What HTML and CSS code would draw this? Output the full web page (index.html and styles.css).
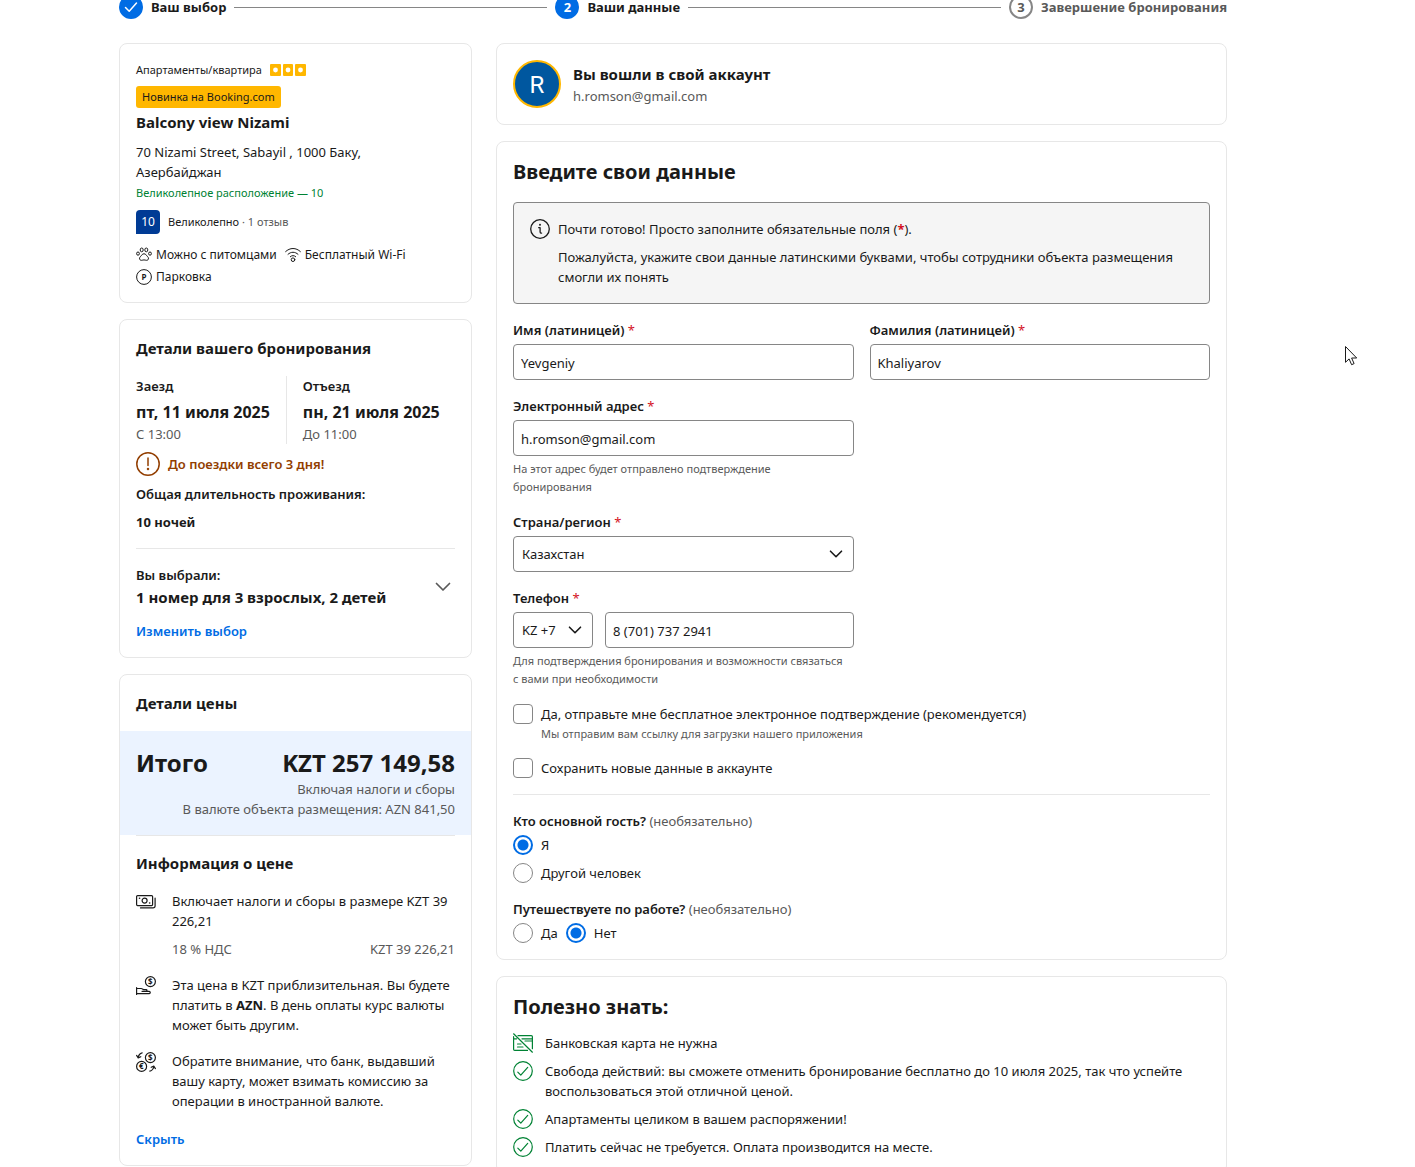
FILE: index.html
```html
<!DOCTYPE html>
<html lang="ru">
  <head>
    <meta charset="UTF-8">
    <meta name="viewport" content="width=device-width, initial-scale=1">
    <title>Booking.com: Ваши данные</title>
    <link rel="stylesheet" href="styles.css">
  </head>
  <body>
    <div class="page">
      <ol class="steps">
        <li class="step">
          <span class="step-mark done">
            <svg width="14" height="14" viewBox="0 0 14 14"><path d="M1.5 7.5l3.700 3.700L12.500 3" fill="none" stroke="#fff" stroke-width="1.5" stroke-linecap="round" stroke-linejoin="round"/></svg>
          </span>
          <span>Ваш выбор</span>
        </li>
        <li class="step-line"></li>
        <li class="step">
          <span class="step-mark current">2</span>
          <span>Ваши данные</span>
        </li>
        <li class="step-line"></li>
        <li class="step next">
          <span class="step-mark">3</span>
          <span>Завершение бронирования</span>
        </li>
      </ol>

      <div class="columns">
        <aside class="column">
          <section class="card hotel">
            <div class="hotel-type">
              <span>Апартаменты/квартира</span>
              <svg width="36" height="12" viewBox="0 0 36 12">
                <g fill="#ffb700">
                  <rect x="0" y="0" width="11" height="12" rx="1"/>
                  <rect x="13" y="0" width="10" height="12" rx="1"/>
                  <rect x="25" y="0" width="11" height="12" rx="1"/>
                </g>
                <g fill="#fff">
                  <circle cx="5.5" cy="6" r="2.4"/>
                  <circle cx="18" cy="6" r="2.4"/>
                  <circle cx="30.5" cy="6" r="2.4"/>
                </g>
              </svg>
            </div>
            <span class="badge">Новинка на Booking.com</span>
            <h2 class="title">Balcony view Nizami</h2>
            <address class="address">70 Nizami Street, Sabayil , 1000 Баку, Азербайджан</address>
            <div class="location">Великолепное расположение — 10</div>
            <div class="review">
              <span class="score">10</span>
              <span>Великолепно <span class="muted">· 1 отзыв</span></span>
            </div>
            <ul class="facilities">
              <li>
                <svg width="16" height="16" viewBox="0 0 16 16" fill="none" stroke="#1a1a1a" stroke-width="1">
                  <ellipse cx="5.700" cy="2.900" rx="1.500" ry="1.900"/>
                  <ellipse cx="10.300" cy="2.900" rx="1.500" ry="1.900"/>
                  <ellipse cx="2" cy="6.600" rx="1.400" ry="1.600"/>
                  <ellipse cx="14" cy="6.600" rx="1.400" ry="1.600"/>
                  <path d="M8 6.800c-1.600 0-2.200 1.200-3 2.200-.9 1-1.800 1.700-1.400 3 .4 1.400 1.700 1.500 2.600 1.200 1.200-.4 2.400-.4 3.600 0 .9.300 2.200.2 2.600-1.200.4-1.300-.5-2-1.400-3-.8-1-1.400-2.200-3-2.200z"/>
                </svg>
                <span>Можно с питомцами</span>
              </li>
              <li>
                <svg width="16" height="16" viewBox="0 0 16 16" fill="none" stroke="#1a1a1a" stroke-width="1" stroke-linecap="round">
                  <path d="M.6 4.600C5 .4 11 .4 15.400 4.600M3 7.300c3-2.800 7-2.800 10 0M5.300 9.700c1.600-1.500 3.800-1.500 5.400 0"/>
                  <circle cx="8" cy="12.700" r="1.800"/>
                </svg>
                <span>Бесплатный Wi-Fi</span>
              </li>
              <li>
                <svg width="16" height="16" viewBox="0 0 16 16">
                  <circle cx="8" cy="8" r="7.400" fill="none" stroke="#1a1a1a" stroke-width="1"/>
                  <text class="glyph" x="8" y="11" font-size="8" text-anchor="middle">P</text>
                </svg>
                <span>Парковка</span>
              </li>
            </ul>
          </section>

          <section class="card booking">
            <h2 class="title">Детали вашего бронирования</h2>
            <div class="dates">
              <div class="date">
                <div class="strong">Заезд</div>
                <div class="date-value">пт, 11 июля 2025</div>
                <div class="muted">С 13:00</div>
              </div>
              <div class="date">
                <div class="strong">Отъезд</div>
                <div class="date-value">пн, 21 июля 2025</div>
                <div class="muted">До 11:00</div>
              </div>
            </div>
            <div class="warning">
              <svg width="24" height="24" viewBox="0 0 24 24" fill="none" stroke="#923e01" stroke-width="1.500" stroke-linecap="round">
                <circle cx="12" cy="12" r="11.200"/>
                <path d="M12 6v7.500"/>
                <circle cx="12" cy="17" r=".5"/>
              </svg>
              <span>До поездки всего 3 дня!</span>
            </div>
            <div class="strong">Общая длительность проживания:</div>
            <div class="nights">10 ночей</div>
            <div class="choice">
              <div>
                <div class="strong">Вы выбрали:</div>
                <div class="title">1 номер для 3 взрослых, 2 детей</div>
              </div>
              <button class="toggle" type="button" aria-label="Показать детали">
                <svg width="16" height="10" viewBox="0 0 16 10"><path d="M1.500 1.500L8 8l6.500-6.500" fill="none" stroke="#595959" stroke-width="1.700" stroke-linecap="round" stroke-linejoin="round"/></svg>
              </button>
            </div>
            <a class="link" href="#">Изменить выбор</a>
          </section>

          <section class="card price">
            <h2 class="title price-title">Детали цены</h2>
            <div class="total">
              <div class="total-row">
                <span>Итого</span>
                <span>KZT 257 149,58</span>
              </div>
              <div class="muted">Включая налоги и сборы</div>
              <div class="muted">В валюте объекта размещения: AZN 841,50</div>
            </div>
            <div class="price-info">
              <h3 class="title">Информация о цене</h3>
              <div class="note">
                <svg width="20" height="20" viewBox="0 0 20 20" fill="none" stroke="#1a1a1a" stroke-width="1.200" stroke-linecap="round" stroke-linejoin="round">
                  <rect x=".6" y="3.600" width="16" height="10" rx="1"/>
                  <circle cx="8.600" cy="8.600" r="2.500"/>
                  <path d="M3.500 6.300h.1M13.600 11h.1" stroke-width="1.600"/>
                  <path d="M4.500 15.900h12.500c1.300 0 2.100-.8 2.100-2.100V6.200"/>
                </svg>
                <div class="note-text">
                  <p>Включает налоги и сборы в размере KZT 39 226,21</p>
                  <div class="tax muted">
                    <span>18 % НДС</span>
                    <span>KZT 39 226,21</span>
                  </div>
                </div>
              </div>
              <div class="note">
                <svg width="20" height="20" viewBox="0 0 20 20" fill="none" stroke="#1a1a1a" stroke-width="1.200" stroke-linecap="round" stroke-linejoin="round">
                  <circle cx="14.400" cy="5.600" r="5"/>
                  <path d="M.6 11.500v7M.6 12.500h4.500c1.500 0 2 1.200 3.300 1.200h1.800c1 0 1 1.600 0 1.600H6M10.500 15.300h2.700c1.300 0 1.500 2.300 0 2.300H.8"/>
                  <text class="glyph" x="14.400" y="8.700" font-size="8" text-anchor="middle">$</text>
                </svg>
                <p class="note-text">Эта цена в KZT приблизительная. Вы будете платить в <b>AZN</b>. В день оплаты курс валюты может быть другим.</p>
              </div>
              <div class="note">
                <svg width="20" height="20" viewBox="0 0 20 20" fill="none" stroke="#1a1a1a" stroke-width="1.200" stroke-linecap="round" stroke-linejoin="round">
                  <circle cx="14.400" cy="5.600" r="5"/>
                  <circle cx="5.600" cy="14.400" r="5"/>
                  <path d="M6.200.8C4 1.400 2.600 2.800 2.200 5.500M.6 3.400l1.600 2.500 2.600-1.200M13.800 19.200c2.200-.6 3.600-2 4-4.700M19.400 16.600l-1.600-2.500-2.600 1.200"/>
                  <text class="glyph" x="14.400" y="8.700" font-size="8" text-anchor="middle">$</text>
                  <text class="glyph" x="5.400" y="17.400" font-size="8" text-anchor="middle">€</text>
                </svg>
                <p class="note-text">Обратите внимание, что банк, выдавший вашу карту, может взимать комиссию за операции в иностранной валюте.</p>
              </div>
              <a class="link" href="#">Скрыть</a>
            </div>
          </section>
        </aside>

        <main class="column">
          <section class="card account">
            <span class="avatar">R</span>
            <div>
              <div class="title">Вы вошли в свой аккаунт</div>
              <div class="muted">h.romson@gmail.com</div>
            </div>
          </section>

          <form class="card details">
            <h1 class="heading">Введите свои данные</h1>
            <div class="alert">
              <svg width="20" height="20" viewBox="0 0 20 20" fill="none" stroke="#1a1a1a" stroke-width="1.300" stroke-linecap="round" stroke-linejoin="round">
                <circle cx="10" cy="10" r="9.300"/>
                <path d="M8.700 8.700h1.400v4.200c0 .8.600 1.200 1.500 1.200"/>
                <circle cx="10" cy="5.800" r=".4"/>
              </svg>
              <div>
                <p>Почти готово! Просто заполните обязательные поля (<b class="required">*</b>).</p>
                <p>Пожалуйста, укажите свои данные латинскими буквами, чтобы сотрудники объекта размещения смогли их понять</p>
              </div>
            </div>

            <div class="fields">
              <div class="field">
                <label for="firstname">Имя (латиницей) <span class="required">*</span></label>
                <input id="firstname" class="control" type="text" value="Yevgeniy">
              </div>
              <div class="field">
                <label for="lastname">Фамилия (латиницей) <span class="required">*</span></label>
                <input id="lastname" class="control" type="text" value="Khaliyarov">
              </div>
              <div class="field first">
                <label for="email">Электронный адрес <span class="required">*</span></label>
                <input id="email" class="control" type="email" value="h.romson@gmail.com">
                <div class="help">На этот адрес будет отправлено подтверждение бронирования</div>
              </div>
              <div class="field first">
                <label for="country">Страна/регион <span class="required">*</span></label>
                <div class="select">
                  <select id="country" class="control">
                    <option>Казахстан</option>
                  </select>
                  <svg width="14" height="8" viewBox="0 0 14 8"><path d="M1.500 1.200L7 6.700l5.500-5.500" fill="none" stroke="#1a1a1a" stroke-width="1.600" stroke-linecap="round" stroke-linejoin="round"/></svg>
                </div>
              </div>
              <div class="field first">
                <label for="phone">Телефон <span class="required">*</span></label>
                <div class="phone">
                  <div class="select">
                    <select class="control" aria-label="Код страны">
                      <option>KZ +7</option>
                    </select>
                    <svg width="14" height="8" viewBox="0 0 14 8"><path d="M1.500 1.200L7 6.700l5.500-5.500" fill="none" stroke="#1a1a1a" stroke-width="1.600" stroke-linecap="round" stroke-linejoin="round"/></svg>
                  </div>
                  <input id="phone" class="control" type="tel" value="8 (701) 737 2941">
                </div>
                <div class="help">Для подтверждения бронирования и возможности связаться с вами при необходимости</div>
              </div>
            </div>

            <div class="checks">
              <label class="option">
                <input type="checkbox">
                <span>Да, отправьте мне бесплатное электронное подтверждение (рекомендуется)<small>Мы отправим вам ссылку для загрузки нашего приложения</small></span>
              </label>
              <label class="option">
                <input type="checkbox">
                <span>Сохранить новые данные в аккаунте</span>
              </label>
            </div>

            <fieldset class="question">
              <legend>Кто основной гость? <span class="muted">(необязательно)</span></legend>
              <div class="options">
                <label class="option"><input type="radio" name="guest" checked><span>Я</span></label>
                <label class="option"><input type="radio" name="guest"><span>Другой человек</span></label>
              </div>
            </fieldset>
            <fieldset class="question">
              <legend>Путешествуете по работе? <span class="muted">(необязательно)</span></legend>
              <div class="options inline">
                <label class="option"><input type="radio" name="work"><span>Да</span></label>
                <label class="option"><input type="radio" name="work" checked><span>Нет</span></label>
              </div>
            </fieldset>
          </form>

          <section class="card">
            <h2 class="heading">Полезно знать:</h2>
            <ul class="good">
              <li>
                <svg width="20" height="20" viewBox="0 0 20 20" fill="none" stroke="#008234" stroke-width="1.200" stroke-linecap="round" stroke-linejoin="round">
                  <path d="M5 2.600h13.300c.7 0 1.100.4 1.100 1.100v12M.6 3.500v12.800c0 .7.4 1.100 1.100 1.100h12.800M9 5.800h10.400M.6 5.800h3M12 8h7.400M4.500 11h3.500M4.500 14h5.500M.6.800l18.800 18.400"/>
                </svg>
                <span>Банковская карта не нужна</span>
              </li>
              <li>
                <svg width="20" height="20" viewBox="0 0 20 20" fill="none" stroke="#008234" stroke-width="1.200" stroke-linecap="round" stroke-linejoin="round"><circle cx="10" cy="10" r="9.300"/><path d="M4.800 11.200l3 3 6.900-7.800"/></svg>
                <span>Свобода действий: вы сможете отменить бронирование бесплатно до 10 июля 2025, так что успейте воспользоваться этой отличной ценой.</span>
              </li>
              <li>
                <svg width="20" height="20" viewBox="0 0 20 20" fill="none" stroke="#008234" stroke-width="1.200" stroke-linecap="round" stroke-linejoin="round"><circle cx="10" cy="10" r="9.300"/><path d="M4.800 11.200l3 3 6.900-7.800"/></svg>
                <span>Апартаменты целиком в вашем распоряжении!</span>
              </li>
              <li>
                <svg width="20" height="20" viewBox="0 0 20 20" fill="none" stroke="#008234" stroke-width="1.200" stroke-linecap="round" stroke-linejoin="round"><circle cx="10" cy="10" r="9.300"/><path d="M4.800 11.200l3 3 6.900-7.800"/></svg>
                <span>Платить сейчас не требуется. Оплата производится на месте.</span>
              </li>
            </ul>
          </section>
        </main>
      </div>
    </div>

    <svg class="pointer" width="13" height="20" viewBox="0 0 13 20"><path d="M.5.500v15.800l3.600-3.400 2.500 5.800 2.500-1.100-2.500-5.600h5.100z" fill="#fff" stroke="#1a1a1a" stroke-width="1"/></svg>
  </body>
</html>
```
FILE: styles.css
```css
* {
  box-sizing: border-box;
  margin: 0;
  padding: 0;
}

body {
  background: #ffffff;
  color: #1a1a1a;
  font-family: "Segoe UI", "Noto Sans", sans-serif;
  font-size: 13px;
  line-height: 20px;
}

ul,
ol {
  list-style: none;
}

svg {
  flex: none;
}

.page {
  padding: 0 188px 0 119px;
}

.muted {
  color: #595959;
}

.strong {
  font-weight: 600;
}

.required {
  color: #d4111e;
}

.link {
  display: block;
  color: #006ce4;
  font-weight: 600;
  text-decoration: none;
}

.glyph {
  fill: #1a1a1a;
  stroke: none;
  font-weight: 700;
}

/* steps */

.steps {
  display: flex;
  align-items: center;
  gap: 8px;
  margin-top: -5px;
  margin-bottom: 24px;
  font-weight: 700;
}

.step {
  display: flex;
  align-items: center;
  gap: 8px;
  white-space: nowrap;
}

.step.next {
  color: #595959;
}

.step-line {
  flex: 1;
  height: 1px;
  background: #868686;
}

.step-mark {
  display: flex;
  align-items: center;
  justify-content: center;
  width: 24px;
  height: 24px;
  border: 2px solid #868686;
  border-radius: 50%;
}

.step-mark.done,
.step-mark.current {
  border-color: #006ce4;
  background: #006ce4;
  color: #ffffff;
}

/* layout */

.columns {
  display: grid;
  grid-template-columns: minmax(0, 353fr) minmax(0, 731fr);
  align-items: start;
  gap: 24px;
}

.column {
  display: flex;
  flex-direction: column;
  gap: 16px;
}

.card {
  border: 1px solid #e7e7e7;
  border-radius: 8px;
  padding: 16px;
}

.title {
  font-size: 15px;
  font-weight: 700;
  line-height: 24px;
}

.heading {
  font-size: 20px;
  font-weight: 700;
  line-height: 28px;
}

/* hotel */

.hotel {
  font-size: 11px;
  line-height: 18px;
}

.hotel-type {
  display: flex;
  align-items: center;
  gap: 8px;
  margin-bottom: 6px;
  line-height: 20px;
}

.badge {
  display: inline-block;
  margin-bottom: 2px;
  padding: 2px 6px;
  border-radius: 3px;
  background: #ffb700;
}

.address {
  max-width: 240px;
  margin-top: 8px;
  font-size: 13px;
  font-style: normal;
  line-height: 20px;
}

.location {
  margin-top: 2px;
  color: #008234;
}

.review {
  display: flex;
  align-items: center;
  gap: 8px;
  margin: 8px 0 12px;
}

.score {
  width: 24px;
  height: 24px;
  border-radius: 4px 4px 4px 0;
  background: #003b95;
  color: #ffffff;
  font-size: 12px;
  line-height: 24px;
  text-align: center;
}

.facilities {
  display: flex;
  flex-wrap: wrap;
  gap: 4px 8px;
  font-size: 12px;
}

.facilities li {
  display: flex;
  align-items: center;
  gap: 4px;
}

/* booking */

.dates {
  display: flex;
  margin: 16px 0 8px;
}

.date + .date {
  margin-left: 16px;
  padding-left: 16px;
  border-left: 1px solid #e7e7e7;
}

.date-value {
  margin-top: 4px;
  font-size: 16px;
  font-weight: 700;
  line-height: 24px;
}

.warning {
  display: flex;
  align-items: center;
  gap: 8px;
  margin-bottom: 8px;
  color: #923e01;
  font-weight: 600;
}

.nights {
  margin-top: 8px;
  font-weight: 700;
}

.choice {
  display: flex;
  align-items: center;
  justify-content: space-between;
  margin: 16px 0 12px;
  padding-top: 16px;
  border-top: 1px solid #e7e7e7;
}

.toggle {
  display: flex;
  padding: 4px;
  border: none;
  background: none;
}

/* price */

.price {
  padding: 0;
}

.price-title {
  padding: 16px;
}

.total {
  padding: 16px;
  background: #ebf3ff;
  text-align: right;
}

.total-row {
  display: flex;
  justify-content: space-between;
  font-size: 24px;
  font-weight: 700;
  line-height: 32px;
}

.price-info {
  margin: 0 16px;
  padding: 15px 0 16px;
  border-top: 1px solid #e7e7e7;
}

.price-info .link {
  margin-top: 18px;
}

.note {
  display: flex;
  gap: 16px;
  margin-top: 16px;
}

.note svg {
  margin-top: 1px;
}

.note-text {
  flex: 1;
}

.tax {
  display: flex;
  justify-content: space-between;
  margin-top: 8px;
}

/* account */

.account {
  display: flex;
  align-items: center;
  gap: 12px;
}

.avatar {
  width: 48px;
  height: 48px;
  border: 2px solid #ffb700;
  border-radius: 50%;
  background: #00579f;
  color: #ffffff;
  font-family: Roboto, sans-serif;
  font-size: 24px;
  line-height: 46px;
  text-align: center;
}

/* details */

.alert {
  display: flex;
  gap: 8px;
  margin: 16px 0;
  padding: 16px;
  border: 1px solid #868686;
  border-radius: 4px;
  background: #f5f5f5;
}

.alert p + p {
  margin-top: 8px;
}

.fields {
  display: grid;
  grid-template-columns: 1fr 1fr;
  gap: 16px;
}

.field.first {
  grid-column: 1;
}

.field label {
  display: block;
  margin-bottom: 4px;
  font-weight: 600;
}

.field .required {
  font-weight: 400;
}

.control {
  display: block;
  width: 100%;
  height: 36px;
  padding: 2px 7px 0;
  border: 1px solid #868686;
  border-radius: 4px;
  background: #ffffff;
  color: #1a1a1a;
  font: inherit;
}

.select {
  position: relative;
}

.select .control {
  padding: 0 8px;
  appearance: none;
}

.select svg {
  position: absolute;
  top: 14px;
  right: 11px;
  pointer-events: none;
}

.phone {
  display: grid;
  grid-template-columns: 80px 1fr;
  gap: 12px;
}

.help {
  margin-top: 4px;
  padding-right: 8px;
  color: #595959;
  font-size: 11px;
  line-height: 18px;
}

.checks {
  display: flex;
  flex-direction: column;
  gap: 14px;
  margin-top: 16px;
  padding-bottom: 16px;
  border-bottom: 1px solid #e7e7e7;
}

.option {
  display: flex;
  align-items: flex-start;
  gap: 8px;
}

.option small {
  display: block;
  color: #595959;
  font-size: 11px;
}

.option input {
  flex: none;
  width: 20px;
  height: 20px;
  border: 1px solid #868686;
  border-radius: 4px;
  background: #ffffff;
  appearance: none;
}

.option input[type="radio"] {
  border-radius: 50%;
}

.option input[type="radio"]:checked {
  border: 2px solid #006ce4;
  background: radial-gradient(circle, #006ce4 5px, #ffffff 6px);
}

.question {
  margin-top: 16px;
  border: none;
}

.question legend {
  margin-bottom: 4px;
  font-weight: 600;
}

.question .muted {
  font-weight: 400;
}

.options {
  display: flex;
  flex-direction: column;
  gap: 8px;
}

.options.inline {
  flex-direction: row;
}

/* good to know */

.good {
  display: flex;
  flex-direction: column;
  gap: 8px;
  margin-top: 12px;
}

.good li {
  display: flex;
  gap: 12px;
}

.pointer {
  position: absolute;
  top: 346px;
  left: 1345px;
}
```
